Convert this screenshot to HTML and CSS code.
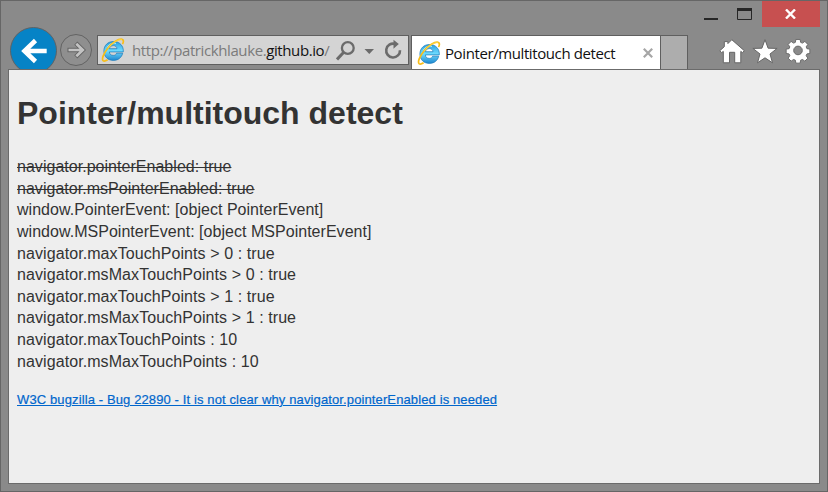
FILE: index.html
```html
<!DOCTYPE html>
<html lang="en">
<head>
<meta charset="utf-8">
<title>Pointer/multitouch detect</title>
<link rel="stylesheet" href="styles.css">
</head>
<body>
<svg class="defs" aria-hidden="true">
  <defs>
    <linearGradient id="e-blue" x1="0" y1="0" x2="0" y2="1">
      <stop offset="0" stop-color="#2b9fdf"/><stop offset=".5" stop-color="#6fdcff"/><stop offset="1" stop-color="#1d86cf"/>
    </linearGradient>
    <symbol id="browser-e" viewBox="0 0 24 24">
      <path d="M21.700 15.200h-6.100c-.5 1.500-1.600 2.200-3.300 2.200-2.400 0-3.800-1.300-3.900-3.500h13.900c.5-5.900-3.600-10.400-9.700-10.400-5.800 0-9.700 3.900-9.700 9.500 0 5.700 3.900 9.400 9.500 9.400 4.600 0 8.100-2.500 9.300-7.200zM8.500 10.700c.3-1.900 1.700-3.100 3.800-3.100s3.500 1.100 3.700 3.100z" fill="url(#e-blue)" stroke="#1679ba" stroke-width=".7"/>
      <path d="M6 9.500c2-3.500 5-4.700 9-4.100" fill="none" stroke="#b5efff" stroke-width="1"/>
      <path d="M21.500 6.200c1.300-2.700 1.200-4.500-.5-4.900-3.200-.7-9.600 3.200-14 8.700C2.700 15.200.4 21 2.100 22.600c.9.800 2.600.4 4.500-.8" fill="none" stroke="#f8bd18" stroke-width="1.700"/>
      <path d="M21 1.600c-3.200-.7-9.600 3.200-14 8.700" fill="none" stroke="#ffe25a" stroke-width=".7"/>
    </symbol>
  </defs>
</svg>
<div class="window">
  <div class="caption">
    <svg class="controls" width="58" height="26" viewBox="0 0 58 26">
      <path d="M0 17h14v2H0z" fill="#262626"/>
      <path d="M33.500 8v10.500h14V8" fill="none" stroke="#262626"/>
      <path d="M33 7h15v3H33z" fill="#262626"/>
    </svg>
    <button class="close" aria-label="Close"><svg width="12" height="10" viewBox="0 0 12 10"><path d="M1 .5l9 9M10 .5l-9 9" stroke="#fff" stroke-width="2.400"/></svg></button>
  </div>
  <div class="toolbar">
    <button class="back" aria-label="Back"><svg width="46" height="46" viewBox="0 0 46 46"><path d="M35.700 23H13M24.500 12.500L13.500 23l11 10.500" fill="none" stroke="#fff" stroke-width="4.600"/></svg></button>
    <button class="forward" aria-label="Forward"><svg width="30" height="30" viewBox="0 0 30 30"><path d="M6.500 15h14.500M14.800 8.200L21.800 15l-7 6.800" fill="none" stroke="#636363" stroke-width="4.500"/><path d="M7.500 15h13.500M15.300 8.700L21.800 15l-6.500 6.300" fill="none" stroke="#c3c3c3" stroke-width="2.700"/></svg></button>
    <div class="address">
      <svg class="logo" width="24" height="24"><use href="#browser-e"/></svg>
      <span class="url">http://patrickhlauke.<b>github.io</b>/</span>
      <svg class="tools" width="72" height="28" viewBox="336 36 72 28">
        <circle cx="347.800" cy="48" r="5.900" fill="none" stroke="#6b6b6b" stroke-width="2.300"/>
        <path d="M343.500 52.500l-6.500 7" stroke="#6b6b6b" stroke-width="3"/>
        <path d="M364.500 49h9.500l-4.700 5z" fill="#6b6b6b"/>
        <path d="M400 50.200a6.900 6.900 0 1 1-5-6.300" fill="none" stroke="#6b6b6b" stroke-width="2.600"/>
        <path d="M393.500 39.800l5.300 4.300-5.300 4.600z" fill="#6b6b6b"/>
      </svg>
    </div>
    <div class="tab">
      <svg class="logo" width="24" height="24"><use href="#browser-e"/></svg>
      <span class="tab-title">Pointer/multitouch detect</span>
      <svg class="tab-close" width="10" height="10" viewBox="0 0 10 10"><path d="M.8 .8l8.400 8.400M9.200 .8L.8 9.200" stroke="#a6a6a6" stroke-width="2.200"/></svg>
    </div>
    <div class="new-tab"></div>
    <svg class="actions" width="96" height="30" viewBox="716 36 96 30">
      <g fill="#fff" stroke="#666" stroke-width="1" stroke-linejoin="round">
        <path d="M731.800 39.700l12.500 11-1.800 2-1.700-1.300v11.400h-6.100v-10.500h-5.200v10.500h-6.200V51.400l-1.700 1.300-1.800-2 4.500-4v-5.100h3.600v2z"/>
        <path d="M765 39.700l3.100 8.500 9 .2-7.100 5.600 2.500 8.800-7.500-5-7.500 5L760 54l-7.100-5.600 9-.2z"/>
        <path fill-rule="evenodd" d="M795.700 39.700h4.600l.5 3.100 1.900.8 2.600-1.800 3.200 3.200-1.800 2.600.8 1.900 3.100.5v4.600l-3.100.5-.8 1.900 1.800 2.600-3.200 3.200-2.600-1.800-1.900.8-.5 3.100h-4.600l-.5-3.100-1.900-.8-2.600 1.800-3.200-3.200 1.800-2.600-.8-1.900-3.100-.5V50l3.100-.5.8-1.900-1.800-2.600 3.200-3.200 2.600 1.800 1.900-.8zM798 46.800a4.600 4.600 0 1 0 0 9.200a4.600 4.600 0 1 0 0-9.200z" transform="translate(798 51) scale(.94) translate(-798 -52)"/>
      </g>
    </svg>
  </div>
  <main class="page">
    <h1>Pointer/multitouch detect</h1>
    <p class="results">
      <del>navigator.pointerEnabled: true</del><br>
      <del>navigator.msPointerEnabled: true</del><br>
      window.PointerEvent: [object PointerEvent]<br>
      window.MSPointerEvent: [object MSPointerEvent]<br>
      <span class="touch">navigator.maxTouchPoints &gt; 0 : true<br>
      navigator.msMaxTouchPoints &gt; 0 : true<br>
      navigator.maxTouchPoints &gt; 1 : true<br>
      navigator.msMaxTouchPoints &gt; 1 : true<br>
      navigator.maxTouchPoints : 10<br>
      navigator.msMaxTouchPoints : 10</span>
    </p>
    <p class="note"><a href="#">W3C bugzilla - Bug 22890 - It is not clear why navigator.pointerEnabled is needed</a></p>
  </main>
</div>
</body>
</html>
```

FILE: styles.css
```css
* { box-sizing: border-box; }
body { margin: 0; overflow: hidden; }
button { padding: 0; border: 0; }
svg { display: block; flex: none; }
.defs { position: absolute; width: 0; height: 0; }

.window {
  width: 828px;
  height: 492px;
  border: 1px solid #666;
  background: #8a8a8a;
  display: flex;
  flex-direction: column;
}

.caption { height: 26px; display: flex; justify-content: flex-end; padding-right: 7px; }
.close {
  width: 58px;
  height: 26px;
  background: #c75050;
  display: flex;
  align-items: center;
  justify-content: center;
}

.toolbar { height: 42px; display: flex; align-items: flex-start; padding-left: 9px; }
.back {
  flex: none;
  width: 47px;
  height: 47px;
  border: 1px solid #5e6265;
  border-radius: 50%;
  background: #0683c6;
  display: flex;
  align-items: center;
  justify-content: center;
}
.forward {
  flex: none;
  width: 32px;
  height: 32px;
  margin: 7px 0 0 3px;
  border: 1px solid #636363;
  border-radius: 50%;
  background: #8f8f8f;
}
.address {
  flex: none;
  width: 312px;
  height: 30px;
  margin: 8px 0 0 5px;
  border: 1px solid #5f5f5f;
  background: #d4d4d4;
  display: flex;
  align-items: center;
  padding-left: 3px;
}
.url {
  flex: 1;
  min-width: 0;
  margin-left: 7px;
  font: 15px/20px "Open Sans", sans-serif;
  letter-spacing: -.4px;
  color: #7b7b7b;
  white-space: nowrap;
}
.url b { font-weight: 400; color: #111; }
.tab {
  flex: none;
  width: 250px;
  height: 34px;
  margin: 8px 0 0 2px;
  border: 1px solid #5f5f5f;
  border-bottom: 0;
  background: #fff;
  display: flex;
  align-items: center;
  padding: 0 7px 0 5px;
}
.tab-title {
  flex: 1;
  margin-left: 4px;
  font: 15px/20px "Open Sans", sans-serif;
  letter-spacing: -.4px;
  color: #111;
  white-space: nowrap;
}
.new-tab {
  flex: none;
  width: 27px;
  height: 34px;
  margin-top: 8px;
  border: 1px solid #5f5f5f;
  border-width: 1px 1px 0 0;
  background: #adadad;
}
.actions { margin: 9px 0 0 28px; }

.page {
  position: relative;
  width: 812px;
  height: 415px;
  margin-left: 7px;
  border: 1px solid #6b6b6b;
  background: #eee;
  padding: 0 8px;
  font: 16px/21.6px "Liberation Sans", sans-serif;
  color: #333;
}
h1 { margin: 22px 0 21.3px; font-size: 32px; line-height: 43px; }
.results { margin: 0; letter-spacing: .03px; }
.touch { letter-spacing: .08px; }
.note { margin: 18.7px 0 0; font-size: 13px; line-height: 17.6px; }
.note a { color: #06c; letter-spacing: .119px; -webkit-text-stroke: .2px #06c; }
```
